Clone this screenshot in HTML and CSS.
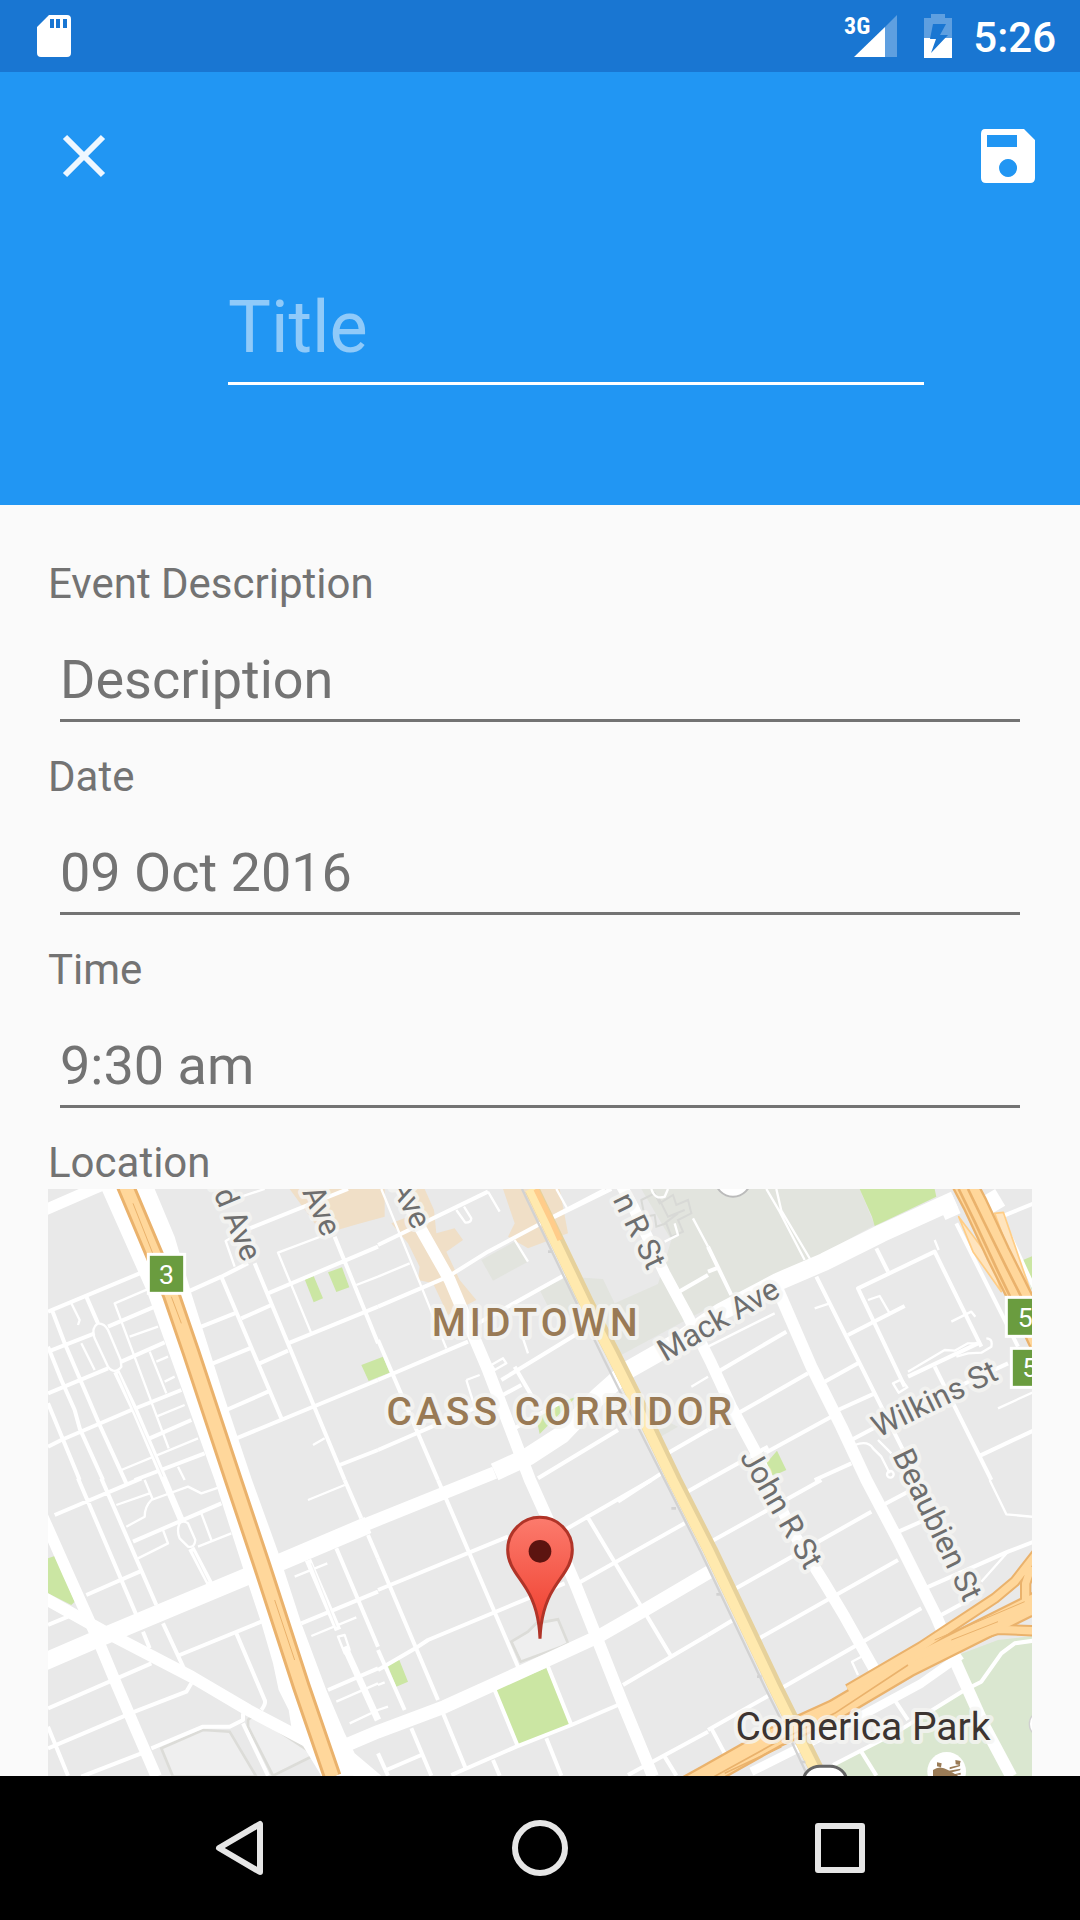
FILE: index.html
```html
<!DOCTYPE html>
<html lang="en">
<head>
  <meta charset="UTF-8">
  <meta name="viewport" content="width=device-width, initial-scale=1">
  <title>New Event</title>
  <link rel="stylesheet" href="styles.css">
</head>
<body>
  <div class="status-bar">
    <svg class="sd-icon" width="36" height="44" viewBox="0 0 36 44" aria-hidden="true">
      <path fill="#fff" fill-rule="evenodd" d="M13 1h18q4 0 4 4v34q0 4-4 4H5q-4 0-4-4V13zM14 5v9h4V5zm6 0v9h4V5zm7 0v9h4V5z"/>
    </svg>
    <div class="status-right">
      <svg width="56" height="44" viewBox="0 0 56 44" aria-hidden="true">
        <path fill="#5e9fe0" d="M54 1v42H42V13z"/>
        <path fill="#fff" d="M42 13v30H11z"/>
        <text class="network" x="1" y="20">3G</text>
      </svg>
      <svg class="battery" width="30" height="44" viewBox="0 0 30 44" aria-hidden="true">
        <path fill="#5e9fe0" d="M8 0h14v4h7v20H1V4h7z"/>
        <path fill="#fff" d="M1 24h28v20H1z"/>
        <path fill="#1976d2" d="M10 10h13l-6 11h8L8 39l5-14H7z"/>
      </svg>
      <span class="clock">5:26</span>
    </div>
  </div>

  <header class="header">
    <div class="toolbar">
      <button type="button" class="icon-btn close-btn" aria-label="Close">
        <svg width="44" height="44" viewBox="0 0 44 44"><path d="M3 3l38 38M41 3L3 41" stroke="#eef7ff" stroke-width="6"/></svg>
      </button>
      <button type="submit" form="eventForm" class="icon-btn" aria-label="Save">
        <svg width="56" height="56" viewBox="0 0 56 56">
          <path fill="#fff" fill-rule="evenodd" d="M5 1h39l11 11v38q0 5-5 5H6q-5 0-5-5V6q0-5 4-5zM7 7v12h30V7zM28 31a9 9 0 1 0 .1 0z"/>
        </svg>
      </button>
    </div>
    <input type="text" class="title-input" form="eventForm" placeholder="Title" aria-label="Title">
  </header>

  <main>
    <form id="eventForm" class="event-form">
      <div class="field">
        <label for="description">Event Description</label>
        <input type="text" id="description" placeholder="Description">
      </div>
      <div class="field">
        <label for="date">Date</label>
        <input type="text" id="date" value="09 Oct 2016">
      </div>
      <div class="field">
        <label for="time">Time</label>
        <input type="text" id="time" value="9:30 am">
      </div>
      <h2 class="map-title">Location</h2>
    </form>

    <div class="map">
      <svg class="map-canvas" viewBox="0 27 2952 1761" preserveAspectRatio="xMidYMin slice" role="img" aria-label="Map of Midtown">
        <defs>
          <linearGradient id="pinFill" x1="0" y1="0" x2="0" y2="1">
            <stop offset="0" stop-color="#fc7b6d"/>
            <stop offset="1" stop-color="#ee3a29"/>
          </linearGradient>
        </defs>

        <!-- areas -->
        <g class="beige">
          <path d="M725 27H1010V110L930 132L850 155L800 130z"/>
          <path d="M1080 27H1130L1158 90L1165 160L1220 145L1245 180L1195 215L1235 300L1285 360L1200 405L1155 310L1110 300L1115 260L1080 190L1030 130L1080 110z"/>
          <path d="M1365 27H1535L1560 160L1440 205L1380 170L1400 130z"/>
        </g>
        <g class="campus">
          <path d="M1300 240L1400 185L1440 245L1335 302z"/>
          <path d="M1475 330L1560 290L1665 297L1700 370L1830 312L1870 180L1780 27H2435L2480 135L2280 245L1980 385L1710 530L1600 410L1510 400z"/>
          <path d="M1805 770L1850 720L1890 740L1830 775z"/>
        </g>
        <path class="campus-outline" d="M1780 60l40-20 15 30 40-25 10 30 35-15 10 40-40 20 15 35-35 15-15-40-30 10-5-35-30 5zM1830 50l30 60 50-20M1850 130l40-30"/>
        <g class="buildings">
          <path d="M1390 1385L1440 1355L1465 1330L1530 1318L1560 1390L1540 1400L1418 1445z"/>
          <path d="M340 1705L465 1650L545 1655L625 1790H375z"/>
          <path d="M600 1620Q610 1605 640 1620L800 1725L675 1787L600 1640z"/>
        </g>
        <g class="park">
          <path d="M770 298L797 288L825 355L797 367zM840 277L882 262L904 322L865 336zM940 555L1005 530L1025 578L962 603z"/>
          <path d="M1465 715L1500 680L1585 650L1475 762zM2435 27H2660L2665 50L2480 138L2472 110z"/>
          <path d="M2155 850L2187 812L2215 870L2170 890zM2925 240L2952 229V330z"/>
          <path d="M0 1135L22 1127L80 1265L70 1275L0 1240z"/>
          <path d="M1017 1452L1053 1438L1080 1505L1045 1520zM1340 1528L1497 1463L1567 1633L1410 1695z"/>
        </g>
        <path class="grounds" d="M2350 1790V1755L2540 1662L2740 1540L2730 1425L2850 1380L2952 1368V1790z"/>

        <!-- small streets -->
        <g class="lane">
          <path d="M560 260L533 183L580 155M580 50L650 27M870 150L690 218L790 460M325 710L410 675M220 870L450 775M305 325L200 370L362 805M245 470L330 440M305 515L355 640M325 545L360 530M350 605L380 590M70 370L95 420L90 435M100 490L140 570M795 795L830 775M390 860L410 900M925 315L990 290"/>
          <path d="M150 430Q128 445 140 475L180 560Q200 585 220 560L218 540L180 450Q170 430 150 430z"/>
          <path d="M395 1030Q385 1050 395 1075L420 1100Q440 1105 442 1080L420 1030Q405 1020 395 1030z"/>
          <path d="M270 1135L360 1090L345 1050M235 1040L290 1010Q290 980 310 960L420 920L460 940L520 920M205 975L305 940M290 900L315 960M460 1000L490 1080M450 1100L550 1060M780 960L890 915M740 1190L838 1150M790 1368L925 1312M865 1565L990 1510M905 1630L990 1590M870 1370L890 1365L905 1410L890 1420zM990 1515L1010 1507M990 1590L1020 1580"/>
        </g>
        <g class="lane" transform="translate(990 0)">
          <path d="M10 27L130 320L205 505M0 290L95 250M265 600L305 585M290 680L265 600M410 180L450 245M330 35L365 95M235 90L262 128Q280 128 280 115L258 80M430 460L450 520M945 115L990 200M535 27L570 90M940 620L990 590M340 555L375 535L385 550L350 570zM860 185L900 165L890 130M820 27Q830 60 860 50L870 27M520 110L680 27"/>
        </g>
        <g class="lane" transform="translate(1980 0)">
          <path d="M175 27L215 95L290 240M205 27L220 92L308 240M0 500L200 400M320 385L365 370M730 425L790 395L802 410M480 360L515 348L545 400M600 575L710 510L740 512L780 490L810 490M745 530L780 520L820 518L850 500Q855 475 835 475M440 795Q480 780 495 805L520 830L545 880M510 780L550 820M870 685L990 630M680 180L692 210M555 610L580 598L598 622L572 638zM845 900L895 1003L990 1012M900 1115L820 1205M460 1430L432 1445L450 1485"/>
          <circle cx="547" cy="883" r="10"/>
        </g>

        <!-- streets -->
        <g class="street">
          <path d="M0 395L275 280M0 515L140 460M180 440L320 380M0 640L180 565M220 545L350 487M0 800L40 780L250 690L400 630M420 335L520 290L600 250M10 385L50 490L155 735L235 910M0 500L40 600L80 690L95 745L165 900M0 670L95 900M520 290L700 715M620 250L890 900M660 340L990 200M720 490L990 380M565 775L990 600M460 440L560 400M580 415L670 375M495 550L605 505M635 550L720 512M535 690L660 635M875 855L990 810M860 170L990 490M580 155L900 27M305 775L430 720M260 900L470 820M115 350L150 430"/>
          <path d="M20 1005L280 895M90 895L265 1305M160 895L325 1275M255 1085L520 970M115 1245L275 1175M395 1425L640 1325M345 1330L410 1470M565 1360L650 1560Q655 1570 640 1590M285 1355L305 1405M0 1585L310 1450M0 1705L260 1595L415 1535L430 1510M310 1705L465 1640L545 1640L585 1620V1600M100 1790L280 1720M0 1640L60 1787M0 1335L60 1310M585 1630L660 1787M890 900L940 1015M960 1065L990 1135M865 1105L990 1400M760 1330L990 1235M840 1530L990 1465"/>
        </g>
        <g class="street" transform="translate(990 0)">
          <path d="M0 195L330 35M0 380L210 290L330 215L480 135L700 27M0 600L270 485M300 430L560 285M370 600L600 460M0 810L300 680M400 750L560 660M0 480L180 900M410 560L480 680M365 650L430 615M480 895L720 750M895 340L990 285M860 825L990 750M720 965L850 880"/>
          <path d="M0 1230L390 1070M560 1050L820 900M0 1470L120 1400L150 1380L450 1255L560 1210M600 1210L920 1030M180 900L270 1110L420 1460M0 1135L180 1560M0 1410L80 1590M625 1005L880 1430M735 1515L990 1365M195 1600L265 1770M100 1645L160 1787M220 1785L415 1700L580 1635L720 1575M350 1530L420 1700M510 1460L580 1635M505 1675L550 1787M0 1720L30 1787M25 1770L130 1725M345 1740L365 1787M750 1785L990 1655M860 1730L895 1787M920 940L990 900"/>
        </g>
        <g class="street" transform="translate(1980 0)">
          <path d="M0 200L70 345M0 275L25 265M505 205L540 275M325 290L590 820M590 620L450 325L680 215L820 500M600 590L810 490M420 465L590 378M30 575L235 455M350 605L450 550M90 700L300 580M390 690L500 640M170 820L370 710M0 900L180 800M430 780L600 690L900 550M680 560L850 900M810 830L990 745M745 130L930 500M880 110L990 350M880 110L990 65M320 900L430 850M0 750L30 735"/>
          <path d="M0 1090L340 900M75 1230L490 995M145 1380L570 1140M220 1525L640 1285M0 1365L75 1320M0 1650L185 1545M375 1755L560 1660L770 1530M790 1520L820 1505L880 1420L920 1390L990 1380M525 975L600 935M560 1060L650 1020M650 1225L900 1115L990 1080M10 1645L50 1720M550 1545L600 1620M460 1715L505 1787M690 1310L800 1250"/>
        </g>

        <!-- avenues -->
        <g class="avenue">
          <path stroke-width="34" d="M-10 90L140 25L200 0"/>
          <path stroke-width="52" d="M-10 1445L160 1372L600 1188L960 1035"/>
          <path stroke-width="38" d="M950 1035L1340 878"/>
          <path stroke-width="54" d="M1340 876L1440 830L1540 765L1650 650L1740 570L1890 485L2020 395L2190 305L2330 245L2500 160L2720 60"/>
          <path stroke-width="36" d="M1060 27L1120 150L1205 300L1320 570L1446 900L1500 1020L1585 1220L1645 1370L1720 1560L1815 1790"/>
          <path stroke-width="34" d="M1700 -20L1755 80L1850 280L1915 400L1990 550L2050 680L2120 810L2230 1050L2330 1210L2390 1310L2480 1470"/>
          <path stroke-width="36" d="M2190 330L2290 560L2380 740L2455 900L2550 1080L2665 1310L2720 1440L2810 1640L2890 1790"/>
          <path stroke-width="40" d="M860 1710L990 1655L1190 1580L1410 1480L1650 1370L1790 1290L1985 1175"/>
          <path stroke-width="36" d="M-10 1255L170 1355L430 1490L600 1590L790 1690L990 1810"/>
          <path stroke-width="34" d="M-20 1000L60 1180L150 1380L200 1500L260 1640L325 1790"/>
          <path stroke-width="20" d="M205 575L260 690L400 1020M430 1105L485 1210M780 1140L870 1350M890 1400L990 1620"/>
          <path stroke-width="26" d="M2110 1775L2380 1640L2620 1510L2740 1425"/>
          <path stroke-width="50" d="M2690 55L2715 110M2820 40L2850 90"/>
        </g>
        <path fill="#fff" d="M160 27L295 330L500 900L590 1180L640 1330L675 1450L692 1530L722 1590L730 1640L820 1787H1000L920 1720L890 1660L835 1530L760 1330L690 1115L612 900L525 640L430 340L380 170L320 27z"/>
        <path class="alley" d="M210 580L345 890M435 1115L480 1205M790 1150L865 1340"/>

        <!-- Woodward -->
        <g class="line">
          <path stroke="#e6d19b" stroke-width="44" d="M1452 27L1502 130L1617 370L1695 520L1755 640L1880 900L1987 1110L2092 1330L2182 1520L2242 1640L2317 1790"/>
          <path stroke="#ffe9ae" stroke-width="30" d="M1446 27L1495 130L1610 370L1688 520L1748 640L1873 900L1980 1110L2085 1330L2175 1520L2235 1640L2310 1790"/>
          <path stroke="#ffcc8a" stroke-width="16" d="M1464 27L1514 130L1536 180"/>
          <path stroke="#d2d2d2" stroke-width="7" d="M1422 27L1471 130L1586 370L1664 530L1724 650L1850 900L1958 1115L2062 1335L2152 1525L2212 1645L2280 1790"/>
          <path stroke="#d2d2d2" stroke-width="8" d="M1500 215h14M1870 985h14M2005 1243h14M2127 1490h14M2258 1746h14"/>
        </g>

        <!-- freeways -->
        <g class="line">
          <path fill="#ffe4bd" stroke="#ffcd85" stroke-width="5" d="M2732 110L2775 215L2860 335L2830 240zM2840 100L2866 97L2948 335L2920 320z"/>
          <g stroke="#eab26c">
            <path stroke-width="56" d="M225 0L236 27L370 345L430 520L556 900L643 1160L760 1520L853 1790"/>
            <path stroke-width="78" d="M2738 -10L2780 70L2850 220L2925 370L3000 530"/>
            <path stroke-width="68" d="M1880 1840L1980 1785L2180 1672L2360 1590L2580 1460L2760 1370L2990 1255"/>
            <path stroke-width="34" d="M2400 1528L2620 1400L2840 1255L2900 1205L2970 1115M2600 1430L2730 1385L2850 1348L2990 1354M2950 1160L2933 1210V1270L2960 1300"/>
          </g>
          <g stroke="#ffd79b">
            <path stroke-width="38" d="M225 0L236 27L370 345L430 520L556 900L643 1160L760 1520L853 1790"/>
            <path stroke-width="64" d="M2738 -10L2780 70L2850 220L2925 370L3000 530"/>
            <path stroke-width="54" d="M1880 1840L1980 1785L2180 1672L2360 1590L2580 1460L2760 1370L2990 1255"/>
            <path stroke-width="22" d="M2400 1528L2620 1400L2840 1255L2900 1205L2970 1115M2600 1430L2730 1385L2850 1348L2990 1354M2950 1160L2933 1210V1270L2960 1300"/>
          </g>
          <path stroke="#eab26c" stroke-width="8" d="M2732 27L2780 125L2850 275L2945 470M2760 27L2805 120L2878 268L2955 420"/>
          <path stroke="#eab26c" stroke-width="5" d="M1980 1800L2180 1690L2360 1600L2580 1455M2030 1780L2200 1700"/>
          <path stroke="#eab26c" stroke-width="3" d="M2660 1380L2930 1265M2710 1380L2850 1325M255 70L330 260M370 350L400 430M680 1260L740 1440"/>
        </g>

        <!-- route badges -->
        <g class="badge">
          <rect x="301" y="223" width="109" height="117"/>
          <rect x="2875" y="352" width="120" height="117"/>
          <rect x="2890" y="505" width="120" height="117"/>
          <text x="333" y="312">3</text>
          <text x="2909" y="440">5</text>
          <text x="2923" y="592">5</text>
        </g>

        <!-- markers -->
        <circle cx="2055" cy="-4" r="54" fill="#fff" stroke="#bbb" stroke-width="6"/>
        <rect x="2266" y="1759" width="130" height="90" rx="50" fill="#fff" stroke="#666" stroke-width="9"/>
        <circle cx="2696" cy="1774" r="58" fill="#fff"/>
        <path fill="#9a7b56" d="M2655 1790V1770Q2675 1755 2700 1770L2735 1790zM2667 1747l14 3-2 12-12-3zM2722 1740l16 3-3 12-12-2zM2705 1762l32-8-2 5-30 9zM2702 1772l36-6-2 5-30 7zM2712 1784l26-6v6z"/>
        <circle cx="2984" cy="1632" r="40" fill="#fff" stroke="#d0d0d0" stroke-width="4"/>

        <!-- labels -->
        <g class="road-label">
          <text x="585" y="249" text-anchor="end" transform="rotate(67 585 249)">rd Ave</text>
          <text x="824" y="174" text-anchor="end" transform="rotate(66 824 174)">Ave</text>
          <text x="1096" y="152" text-anchor="end" transform="rotate(63 1096 152)">Ave</text>
          <text x="1799" y="274" text-anchor="end" transform="rotate(64 1799 274)">n R St</text>
          <text x="1852" y="547" transform="rotate(-30 1852 547)">Mack Ave</text>
          <text x="2491" y="774" transform="rotate(-26 2491 774)">Wilkins St</text>
          <text x="2074" y="830" transform="rotate(60 2074 830)">John R St</text>
          <text x="2532" y="826" transform="rotate(64 2532 826)">Beaubien St</text>
        </g>
        <g class="area-label">
          <text x="1466" y="467">MIDTOWN</text>
          <text x="1540" y="735">CASS CORRIDOR</text>
        </g>
        <text class="place-label" x="2445" y="1680">Comerica Park</text>

        <!-- pin -->
        <path fill="url(#pinFill)" stroke="#b03428" stroke-width="9" stroke-linejoin="bevel" d="M1476 1376C1474 1326 1462 1270 1436 1228C1408 1182 1379 1156 1379 1109A97 97 0 0 1 1573 1109C1573 1156 1544 1182 1516 1228C1490 1270 1478 1326 1476 1376z"/>
        <circle cx="1476" cy="1114" r="34" fill="#5c1410"/>
      </svg>
    </div>
  </main>

  <nav class="nav-bar">
    <button type="button" class="nav-btn" aria-label="Back">
      <svg width="60" height="60" viewBox="0 0 60 60"><path d="M50 6v48L9 30z"/></svg>
    </button>
    <button type="button" class="nav-btn" aria-label="Home">
      <svg width="60" height="60" viewBox="0 0 60 60"><circle cx="30" cy="30" r="25"/></svg>
    </button>
    <button type="button" class="nav-btn" aria-label="Recent apps">
      <svg width="60" height="60" viewBox="0 0 60 60"><rect x="8" y="8" width="44" height="44"/></svg>
    </button>
  </nav>
</body>
</html>
```

FILE: styles.css
```css
* {
  box-sizing: border-box;
}
body {
  margin: 0;
  min-height: 100vh;
  display: flex;
  flex-direction: column;
  font-family: Roboto, sans-serif;
  background-color: #fafafa;
  color: #737373;
}
svg {
  display: block;
}
button {
  padding: 0;
  border: none;
  background: none;
  cursor: pointer;
}
input {
  display: block;
  width: 100%;
  padding: 0;
  border: none;
  border-radius: 0;
  background: none;
  font-family: inherit;
  outline: none;
}

/* status bar */
.status-bar {
  height: 72px;
  padding: 0 24px 0 36px;
  display: flex;
  align-items: center;
  justify-content: space-between;
  background-color: #1976d2;
  color: white;
}
.status-right {
  display: flex;
  align-items: center;
}
.network {
  fill: white;
  font-family: "Roboto Condensed", Roboto, sans-serif;
  font-size: 24px;
  font-weight: 700;
}
.battery {
  margin: 0 20px 0 24px;
}
.clock {
  font-size: 42px;
  line-height: 48px;
  font-weight: 500;
  padding-top: 4px;
}

/* header */
.header {
  padding-bottom: 120px;
  background-color: #2196f3;
}
.toolbar {
  height: 168px;
  padding: 0 36px;
  display: flex;
  align-items: center;
  justify-content: space-between;
}
.icon-btn {
  width: 72px;
  height: 96px;
  display: flex;
  align-items: center;
  justify-content: center;
}
.close-btn {
  width: 96px;
}
.title-input {
  width: calc(100% - 384px);
  height: 100px;
  margin: 45px 156px 0 228px;
  padding-bottom: 13px;
  border-bottom: 3px solid white;
  font-size: 72px;
  color: white;
}
.title-input::placeholder {
  color: #90caf9;
  opacity: 1;
}

/* form */
main {
  flex: 1;
  display: flex;
  flex-direction: column;
  padding: 55px 48px 0;
}
.field {
  margin-bottom: 31px;
}
.field label,
.map-title {
  display: block;
  margin: 0;
  font-size: 42px;
  font-weight: 400;
  line-height: 48px;
}
.field input {
  width: calc(100% - 24px);
  height: 74px;
  margin: 40px 12px 0;
  padding-bottom: 9px;
  border-bottom: 3px solid #737373;
  font-size: 54px;
  color: #737373;
}
.field input::placeholder {
  color: #737373;
  opacity: 1;
}

/* map */
.map {
  flex: 1;
  min-height: 320px;
  margin-top: 2px;
  position: relative;
  overflow: hidden;
  background-color: #e9e9e9;
}
.map-canvas {
  position: absolute;
  inset: 0;
  width: 100%;
  height: 100%;
}
.beige {
  fill: #f0dfc7;
}
.campus {
  fill: #e2e4de;
}
.campus-outline {
  fill: none;
  stroke: #d8d9d6;
  stroke-width: 6;
}
.buildings {
  fill: #efefef;
  stroke: #dcdcd8;
  stroke-width: 8;
}
.park {
  fill: #cbe6a3;
}
.grounds {
  fill: #dae7d0;
}
.lane,
.street,
.avenue,
.alley,
.line {
  fill: none;
  stroke-linejoin: round;
}
.lane {
  stroke: white;
  stroke-width: 7;
}
.street {
  stroke: white;
  stroke-width: 12;
}
.avenue {
  stroke: white;
}
.alley {
  stroke: #e9e9e9;
  stroke-width: 2;
}
.badge rect {
  fill: #6a9c3f;
  stroke: white;
  stroke-width: 9;
}
.badge text {
  fill: white;
  font-size: 80px;
}
.road-label,
.area-label,
.place-label {
  stroke: rgba(245, 245, 243, 0.8);
  stroke-width: 24;
  stroke-linejoin: round;
  paint-order: stroke;
}
.road-label {
  fill: #6e6e6e;
  font-size: 93px;
}
.area-label {
  fill: #997a55;
  font-size: 117px;
  font-weight: 500;
  letter-spacing: 12px;
  text-anchor: middle;
}
.place-label {
  fill: #3c3431;
  font-size: 117px;
  text-anchor: middle;
}

/* navigation bar */
.nav-bar {
  height: 144px;
  display: flex;
  justify-content: center;
  background-color: black;
}
.nav-btn {
  flex: 0 1 300px;
  display: flex;
  align-items: center;
  justify-content: center;
}
.nav-btn svg {
  fill: none;
  stroke: #e6e6e6;
  stroke-width: 6;
  stroke-linejoin: round;
}
```
